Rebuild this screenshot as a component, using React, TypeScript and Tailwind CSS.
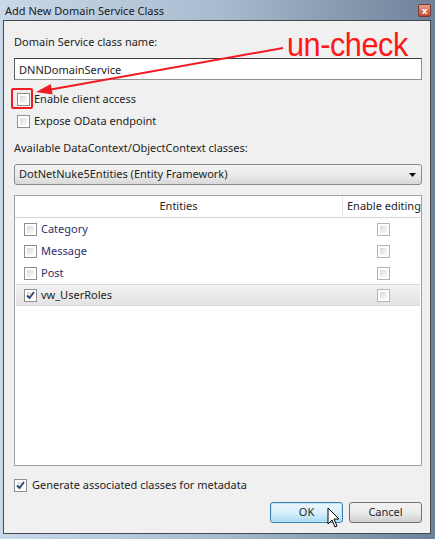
import React from 'react'

const font = { fontFamily: '"Noto Sans", "Open Sans", sans-serif' }

// Win7 style checkbox
const Check = ({ checked = false, faded = false }: { checked?: boolean; faded?: boolean }) => (
  <div
    className={`w-[13px] h-[13px] border ${faded ? 'border-[#b4b4b4]' : 'border-[#8f8f8f]'} bg-white p-[2px] shrink-0`}
  >
    <div className="w-full h-full bg-gradient-to-br from-[#d8d8d8] via-[#ececec] to-[#f8f8f8] relative">
      {checked && (
        <svg viewBox="0 0 9 9" className="absolute -left-[1px] -top-[1px] w-[9px] h-[9px]">
          <path d="M1 4.5 L3.5 7 L8 1" stroke="#2c3f7a" strokeWidth="1.8" fill="none" />
        </svg>
      )}
    </div>
  </div>
)

const entities = [
  { name: 'Category', checked: false },
  { name: 'Message', checked: false },
  { name: 'Post', checked: false },
  { name: 'vw_UserRoles', checked: true },
]

export default function App() {
  return (
    <div
      className="w-[435px] h-[539px] relative overflow-hidden bg-gradient-to-r from-[#c8d8e8] via-[#a9bccf] to-[#6d8299] text-[11px] text-[#1e1e1e]"
      style={font}
    >
      {/* title bar */}
      <div className="h-[20px] flex items-center justify-between pl-[5px] pr-[4px]">
        <span className="text-[11px] leading-none text-[#1a1a1a]">Add New Domain Service Class</span>
        <div className="w-[13px] h-[13px] rounded-[2px] border border-[#7a3a30] bg-gradient-to-b from-[#e8a090] to-[#c0442c] flex items-center justify-center text-white text-[9px] font-bold leading-none">
          x
        </div>
      </div>

      {/* client */}
      <div className="ml-[3px] w-[428px] h-[514px] border border-[#434a54] bg-[#f0f0f0] pl-[10px] pr-[8px] flex flex-col">
        <div className="mt-[13px] leading-[16px]">Domain Service class name:</div>
        <div className="mt-[8px] h-[22px] border border-[#8e8f8f] border-t-[#3e3e3e] border-l-[#5e5e5e] bg-white flex items-center pl-[4px] leading-none">
          DNNDomainService
        </div>

        <div className="mt-[11px] h-[16px] flex items-center gap-[4px] pl-[3px]">
          <Check />
          <span>Enable client access</span>
        </div>
        <div className="mt-[6px] h-[16px] flex items-center gap-[4px] pl-[3px]">
          <Check />
          <span>Expose OData endpoint</span>
        </div>

        <div className="mt-[11px] leading-[16px]">Available DataContext/ObjectContext classes:</div>
        <div className="mt-[8px] h-[21px] rounded-[3px] border border-[#8a8a8a] bg-gradient-to-b from-[#f4f4f4] via-[#ebebeb] to-[#d9d9d9] flex items-center justify-between pl-[4px] pr-[5px]">
          <span>DotNetNuke5Entities (Entity Framework)</span>
          <svg width="7" height="4" viewBox="0 0 7 4">
            <path d="M0 0 H7 L3.5 4 Z" fill="#111" />
          </svg>
        </div>

        {/* list */}
        <div className="mt-[10px] h-[271px] border border-[#a0a0a0] bg-white flex flex-col overflow-hidden">
          <div className="h-[22px] flex border-b border-[#d5d5d5] shrink-0">
            <div className="w-[328px] flex items-center justify-center border-r border-[#e4e4e4]">Entities</div>
            <div className="flex-1 flex items-center pl-[4px] whitespace-nowrap">Enable editing</div>
          </div>
          {entities.map((e) => (
            <div
              key={e.name}
              className={`h-[22px] flex items-center shrink-0 mx-[1px] ${
                e.checked ? 'bg-gradient-to-b from-[#f2f2f2] to-[#e3e3e3] border-y border-[#dadada]' : ''
              }`}
            >
              <div className="w-[327px] flex items-center gap-[4px] pl-[8px]">
                <Check checked={e.checked} />
                <span className={e.checked ? 'text-[#1e1e1e]' : 'text-[#2e2e6a]'}>{e.name}</span>
              </div>
              <div className="flex-1 flex items-center pl-[34px]">
                <Check faded />
              </div>
            </div>
          ))}
        </div>

        <div className="mt-[11px] h-[16px] flex items-center gap-[5px]">
          <Check checked />
          <span>Generate associated classes for metadata</span>
        </div>

        <div className="mt-[9px] flex justify-end gap-[6px]">
          <div className="w-[73px] h-[21px] rounded-[3px] border border-[#3c7fb1] bg-gradient-to-b from-[#eaf6fd] via-[#d9f0fc] to-[#a7d9f5] flex items-center justify-center shadow-[inset_0_0_0_1px_#bfe6fb]">
            OK
          </div>
          <div className="w-[73px] h-[21px] rounded-[3px] border border-[#707070] bg-gradient-to-b from-[#f2f2f2] via-[#ebebeb] to-[#cfcfcf] flex items-center justify-center">
            Cancel
          </div>
        </div>
      </div>

      {/* annotation */}
      <div className="absolute left-[11px] top-[88px] w-[22px] h-[21px] border-2 border-[#f01c24] rounded-[2px]" />
      <svg className="absolute left-0 top-0 pointer-events-none" width="435" height="539">
        <line x1="283" y1="48" x2="48" y2="90" stroke="#f01c24" strokeWidth="2" />
        <path d="M36 92 L52.6 94.6 L50.8 84 Z" fill="#f01c24" />
      </svg>
      <div
        className="absolute left-[287px] top-[25px] text-[33px] leading-[40px] tracking-[-0.5px] text-[#ff1616] origin-left scale-x-[0.93]"
        style={{ fontFamily: '"Liberation Sans", Arial, sans-serif' }}
      >
        un-check
      </div>

      {/* mouse cursor */}
      <svg className="absolute left-[327px] top-[507px]" width="14" height="21" viewBox="0 0 14 21">
        <path d="M1 1 L1 17 L5 13 L8 20 L10 19 L7 12 L12 12 Z" fill="#fff" stroke="#000" strokeWidth="1" />
      </svg>
    </div>
  )
}
